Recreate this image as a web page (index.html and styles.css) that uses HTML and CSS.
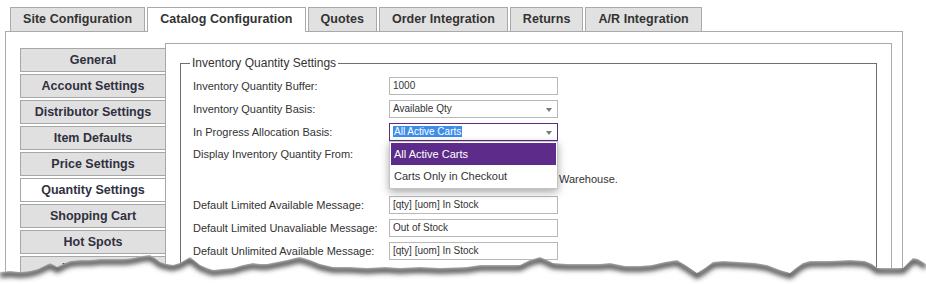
FILE: index.html
```html
<!DOCTYPE html>
<html lang="en">
<head>
    <meta charset="UTF-8">
    <meta name="viewport" content="width=device-width, initial-scale=1.0">
    <link rel="stylesheet" href="styles.css">
</head>
<body>

<div class="page">
    <div class="tabs">
        <div class="tab">Site Configuration</div>
        <div class="tab active">Catalog Configuration</div>
        <div class="tab">Quotes</div>
        <div class="tab">Order Integration</div>
        <div class="tab">Returns</div>
        <div class="tab">A/R Integration</div>
    </div>

    <div class="panel">
        <!-- left menu -->
        <div class="menu">
            <div class="menu-item">General</div>
            <div class="menu-item">Account Settings</div>
            <div class="menu-item">Distributor Settings</div>
            <div class="menu-item">Item Defaults</div>
            <div class="menu-item">Price Settings</div>
            <div class="menu-item active">Quantity Settings</div>
            <div class="menu-item">Shopping Cart</div>
            <div class="menu-item">Hot Spots</div>
            <div class="menu-item">Templates</div>
        </div>

        <div class="content">
            <fieldset class="group">
                <legend>Inventory Quantity Settings</legend>

                <div class="row">
                    <label>Inventory Quantity Buffer:</label>
                    <input class="field" type="text" value="1000">
                </div>
                <div class="row">
                    <label>Inventory Quantity Basis:</label>
                    <div class="select">Available Qty<span class="arrow"></span></div>
                </div>
                <div class="row">
                    <label>In Progress Allocation Basis:</label>
                    <div class="select open">
                        <span class="selected">All Active Carts</span><span class="arrow"></span>
                        <ul class="dropdown">
                            <li class="hover">All Active Carts</li>
                            <li>Carts Only in Checkout</li>
                        </ul>
                    </div>
                </div>
                <div class="row tall">
                    <label>Display Inventory Quantity From:</label>
                    <!-- the open dropdown covers most of these options -->
                    <div class="radios">
                        <div class="radio-line"><span class="radio"></span></div>
                        <div class="radio-line second"><span class="radio"></span><span class="radio-text">Warehouse.</span></div>
                    </div>
                </div>
                <div class="row">
                    <label>Default Limited Available Message:</label>
                    <input class="field" type="text" value="[qty] [uom] In Stock">
                </div>
                <div class="row">
                    <label>Default Limited Unavaliable Message:</label>
                    <input class="field" type="text" value="Out of Stock">
                </div>
                <div class="row">
                    <label>Default Unlimited Available Message:</label>
                    <input class="field" type="text" value="[qty] [uom] In Stock">
                </div>
                <div class="row">
                    <label>Hide Quantity When Unlimited:</label>
                </div>
            </fieldset>
        </div>
    </div>
</div>

<!-- torn paper edge over the bottom of the screenshot -->
<svg class="torn" width="926" height="44" viewBox="0 240 926 44">
    <defs>
        <clipPath id="below">
            <path d="M0,272 L10,271 L20,272 L30,271 L38,269 L44,266 L50,263 L54,265 L57,267 L63,264 L70,261 L80,260 L90,260 L100,259 L112,259 L125,259 L133,258 L142,256 L150,255 L155,258 L160,262 L167,264 L173,265 L180,263 L185,260 L190,257 L195,261 L200,265 L207,268 L213,270 L222,269 L233,268 L243,265 L253,263 L260,264 L267,264 L277,262 L287,260 L295,258 L300,257 L310,260 L320,264 L333,267 L350,267 L367,268 L385,267 L400,268 L420,267 L440,268 L467,267 L480,265 L500,265 L520,265 L530,260 L540,257 L547,260 L553,263 L567,264 L585,264 L600,264 L610,263 L625,266 L640,266 L652,265 L665,262 L677,260 L687,266 L697,273 L705,268 L713,262 L723,261 L740,262 L755,263 L767,265 L780,270 L790,273 L796,268 L803,263 L810,261 L830,261 L850,260 L865,261 L872,264 L877,268 L890,268 L903,268 L908,263 L913,258 L918,259 L926,264 L926,284 L0,284 Z"/>
        </clipPath>
        <filter id="soft" filterUnits="userSpaceOnUse" x="0" y="230" width="926" height="60">
            <feGaussianBlur stdDeviation="2.4"/>
        </filter>
    </defs>
    <rect x="0" y="240" width="926" height="44" fill="#fff" clip-path="url(#below)"/>
    <g clip-path="url(#below)">
        <polyline fill="none" stroke="#3c3c3c" stroke-width="5" filter="url(#soft)" transform="translate(0,3)"
            points="0,272 10,271 20,272 30,271 38,269 44,266 50,263 54,265 57,267 63,264 70,261 80,260 90,260 100,259 112,259 125,259 133,258 142,256 150,255 155,258 160,262 167,264 173,265 180,263 185,260 190,257 195,261 200,265 207,268 213,270 222,269 233,268 243,265 253,263 260,264 267,264 277,262 287,260 295,258 300,257 310,260 320,264 333,267 350,267 367,268 385,267 400,268 420,267 440,268 467,267 480,265 500,265 520,265 530,260 540,257 547,260 553,263 567,264 585,264 600,264 610,263 625,266 640,266 652,265 665,262 677,260 687,266 697,273 705,268 713,262 723,261 740,262 755,263 767,265 780,270 790,273 796,268 803,263 810,261 830,261 850,260 865,261 872,264 877,268 890,268 903,268 908,263 913,258 918,259 926,264"/>
    </g>
</svg>

</body>
</html>
```

FILE: styles.css
```css
body {
    margin: 0;
    font-family: "Liberation Sans", Arial, sans-serif;
    color: #333;
    background: #fff;
    height: 284px;
    overflow: hidden;
    position: relative;
}

.page {
    padding: 7px 0 0 5px;
}

/* top tabs */
.tabs {
    display: flex;
    gap: 2px;
    padding-left: 5px;
}

.tab {
    height: 23px;
    line-height: 23px;
    padding: 0 12px;
    border: 1px solid #a9a9a9;
    border-bottom: none;
    background: #e1e1e1;
    font-size: 12.5px;
    font-weight: bold;
    color: #333;
    letter-spacing: 0.05px;
}

.tab.active {
    height: 24px;
    margin-bottom: -1px;
    background: #fff;
    position: relative;
    z-index: 1;
}

.panel {
    width: 898px;
    height: 260px;
    box-sizing: border-box;
    border: 1px solid #aaa;
    border-bottom: none;
    padding: 11px 10px 0 14px;
    display: flex;
}

/* left menu */
.menu {
    width: 146px;
    flex: none;
    margin-top: 5px;
    margin-right: -1px;
    display: flex;
    flex-direction: column;
    gap: 2px;
    position: relative;
    z-index: 1;
}

.menu-item {
    height: 22px;
    line-height: 22px;
    border: 1px solid #a7a7a7;
    background: #e0e0e0;
    text-align: center;
    font-size: 12.5px;
    font-weight: bold;
    color: #30303f;
}

.menu-item.active {
    background: #fff;
}

.content {
    flex: 1;
    border: 1px solid #aaa;
    padding: 0 14px 0 14px;
}

.group {
    margin: 12px 0 0;
    padding: 4px 0 0 12px;
    border: 1px solid #6f6f6f;
}

.group legend {
    font-size: 12px;
    line-height: 14px;
    padding: 0 2px;
    margin-left: -3px;
    color: #333;
}

.row {
    display: flex;
    align-items: center;
    height: 23px;
    font-size: 11px;
}

.row label {
    width: 196px;
    flex: none;
}

.row.tall {
    height: auto;
    align-items: flex-start;
}

.row.tall label {
    line-height: 23px;
}

.field,
.select {
    width: 169px;
    height: 18px;
    box-sizing: border-box;
    border: 1px solid #b8b8b8;
    padding: 0 3px;
    font-family: "Liberation Sans", Arial, sans-serif;
    font-size: 10px;
    color: #333;
    background: #fff;
    margin: 0;
    outline: none;
}

.select {
    position: relative;
    line-height: 16px;
}

.arrow {
    position: absolute;
    right: 5px;
    top: 7px;
    border-top: 4px solid #7a7a7a;
    border-left: 3.5px solid transparent;
    border-right: 3.5px solid transparent;
}

.select.open {
    border-color: #5d2b89;
}

.selected {
    background: #3d8ee9;
    color: #fff;
    padding: 0 1px;
}

.dropdown {
    position: absolute;
    left: -1px;
    top: calc(100% + 1px);
    width: 169px;
    box-sizing: border-box;
    margin: 0;
    padding: 1px;
    list-style: none;
    background: #fff;
    border: 1px solid #c4c4c4;
    box-shadow: 0 3px 8px rgba(0, 0, 0, 0.35);
    z-index: 5;
}

.dropdown li {
    height: 22px;
    line-height: 22px;
    padding-left: 3px;
    font-size: 11px;
    color: #333;
}

.dropdown li.hover {
    background: #5d2b89;
    color: #fff;
}

.radios {
    padding-bottom: 2px;
    white-space: nowrap;
}

.radio-line {
    height: 23px;
    line-height: 23px;
    display: flex;
    align-items: center;
}

.radio-line.second {
    margin-top: 2px;
}

.radio {
    width: 9px;
    height: 9px;
    border: 1px solid #888;
    border-radius: 50%;
}

.radio-text {
    margin-left: 159px;
}

.torn {
    position: absolute;
    left: 0;
    top: 240px;
    z-index: 10;
}
```
